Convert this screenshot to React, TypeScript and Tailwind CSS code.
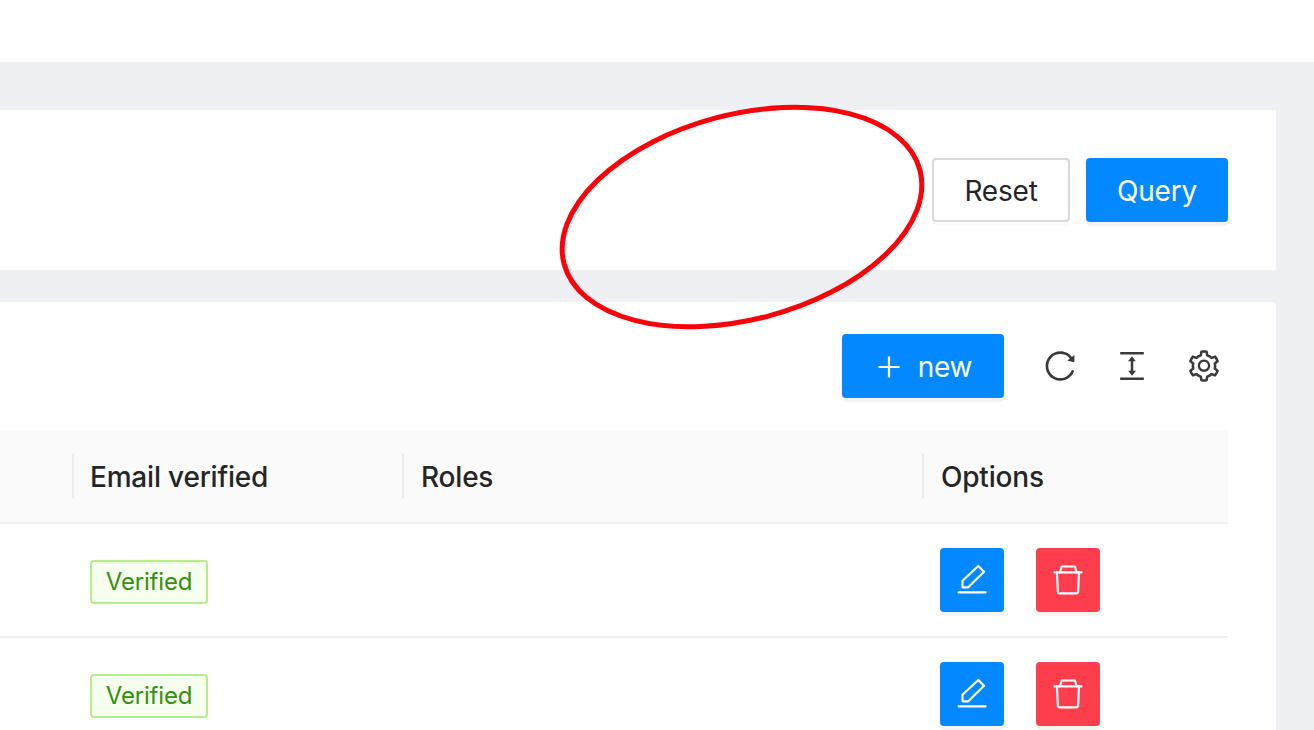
import React from "react";
import { AiOutlineReload, AiOutlineColumnHeight, AiOutlineSetting, AiOutlinePlus } from "react-icons/ai";

function EditIcon() {
  return (
    <svg width="32" height="32" viewBox="0 0 32 32" fill="none" stroke="#fff" strokeWidth="2.2" strokeLinejoin="round" strokeLinecap="round">
      <path d="M6.5 16.8 22.3 2 28 7.7 12.3 23.3H6.5Z" />
      <path d="M2.6 28.3H29.6" />
    </svg>
  );
}

function TrashIcon() {
  return (
    <svg width="32" height="32" viewBox="0 0 32 32" fill="none" stroke="#fff" strokeWidth="2.2" strokeLinejoin="round" strokeLinecap="round">
      <path d="M2.5 8.3H29.5" />
      <path d="M8 8.3 9.7 2.5H23L24.7 8.3" />
      <path d="M4.9 8.3 5.9 27.5Q6 29.3 7.8 29.3H24.2Q26 29.3 26.1 27.5L27 8.3" />
    </svg>
  );
}

function HeaderCell({ label, first, wide }: { label?: string; first?: boolean; wide?: boolean }) {
  return (
    <div className="flex items-center h-full">
      {!first && <div className="w-0.5 h-[44px] bg-[#ececec] shrink-0" />}
      {label && <span className={wide ? "ml-[17px] mt-px font-medium" : "ml-4 mt-px font-medium"}>{label}</span>}
    </div>
  );
}

function Row() {
  return (
    <div className="grid grid-cols-[72px_331px_520px_305px] h-[114px] border-b-2 border-[#f0f0f0] items-center">
      <div />
      <div className="pl-[18px] mt-[2px]">
        <span className="inline-flex items-center justify-center w-[118px] h-[44px] rounded-[4px] border-2 border-[#b7eb8f] bg-[#f6ffed] text-[#358f10] text-[24px]">
          Verified
        </span>
      </div>
      <div />
      <div className="flex gap-8 pl-[17px]">
        <button className="w-16 h-16 rounded-[4px] bg-[#0488ff] flex items-center justify-center shadow-[0_4px_0_rgba(0,0,0,0.045)]">
          <EditIcon />
        </button>
        <button className="w-16 h-16 rounded-[4px] bg-[#ff3e4d] flex items-center justify-center shadow-[0_4px_0_rgba(0,0,0,0.045)]">
          <TrashIcon />
        </button>
      </div>
    </div>
  );
}

export default function App() {
  return (
    <div className="relative w-[1314px] h-[730px] overflow-hidden bg-[#eef0f4] font-['Inter',sans-serif] text-[28px] tracking-[-0.2px] text-[#262626]">
      <div className="h-[62px] bg-white" />
      <div className="pt-12 pr-[38px] flex flex-col gap-8">
        <div className="h-[160px] bg-white pr-12 pt-12 flex justify-end gap-4">
          <button className="w-[138px] h-16 pt-px rounded-[4px] border-2 border-[#d9d9d9] bg-white shadow-[0_4px_0_rgba(0,0,0,0.016)]">
            Reset
          </button>
          <button className="w-[142px] h-16 pt-px rounded-[4px] bg-[#0488ff] text-white shadow-[0_4px_0_rgba(0,0,0,0.045)]">
            Query
          </button>
        </div>
        <div className="bg-white rounded-tr-[4px] pr-12 pt-8">
          <div className="h-16 flex justify-end items-center mb-8">
            <button className="w-[162px] h-16 pt-[2px] rounded-[4px] bg-[#0488ff] text-white flex items-center justify-center gap-[14px] shadow-[0_4px_0_rgba(0,0,0,0.045)]">
              <AiOutlinePlus size={30} />
              <span>new</span>
            </button>
            <div className="flex items-center gap-9 ml-[38px] mr-1.5 text-[#3a3a3a]">
              <AiOutlineReload size={36} />
              <AiOutlineColumnHeight size={36} />
              <AiOutlineSetting size={36} />
            </div>
          </div>
          <div className="grid grid-cols-[72px_330px_520px_306px] h-[94px] bg-[#fafafa] border-b-2 border-[#f0f0f0]">
            <HeaderCell first />
            <HeaderCell label="Email verified" />
            <HeaderCell label="Roles" wide />
            <HeaderCell label="Options" wide />
          </div>
          <Row />
          <Row />
        </div>
      </div>
      <svg className="absolute left-0 top-0 pointer-events-none" width="1314" height="730" fill="none">
        <ellipse cx="742" cy="217" rx="184" ry="102.5" transform="rotate(-14.8 742 217)" stroke="#ff0008" strokeWidth="5" />
      </svg>
    </div>
  );
}
